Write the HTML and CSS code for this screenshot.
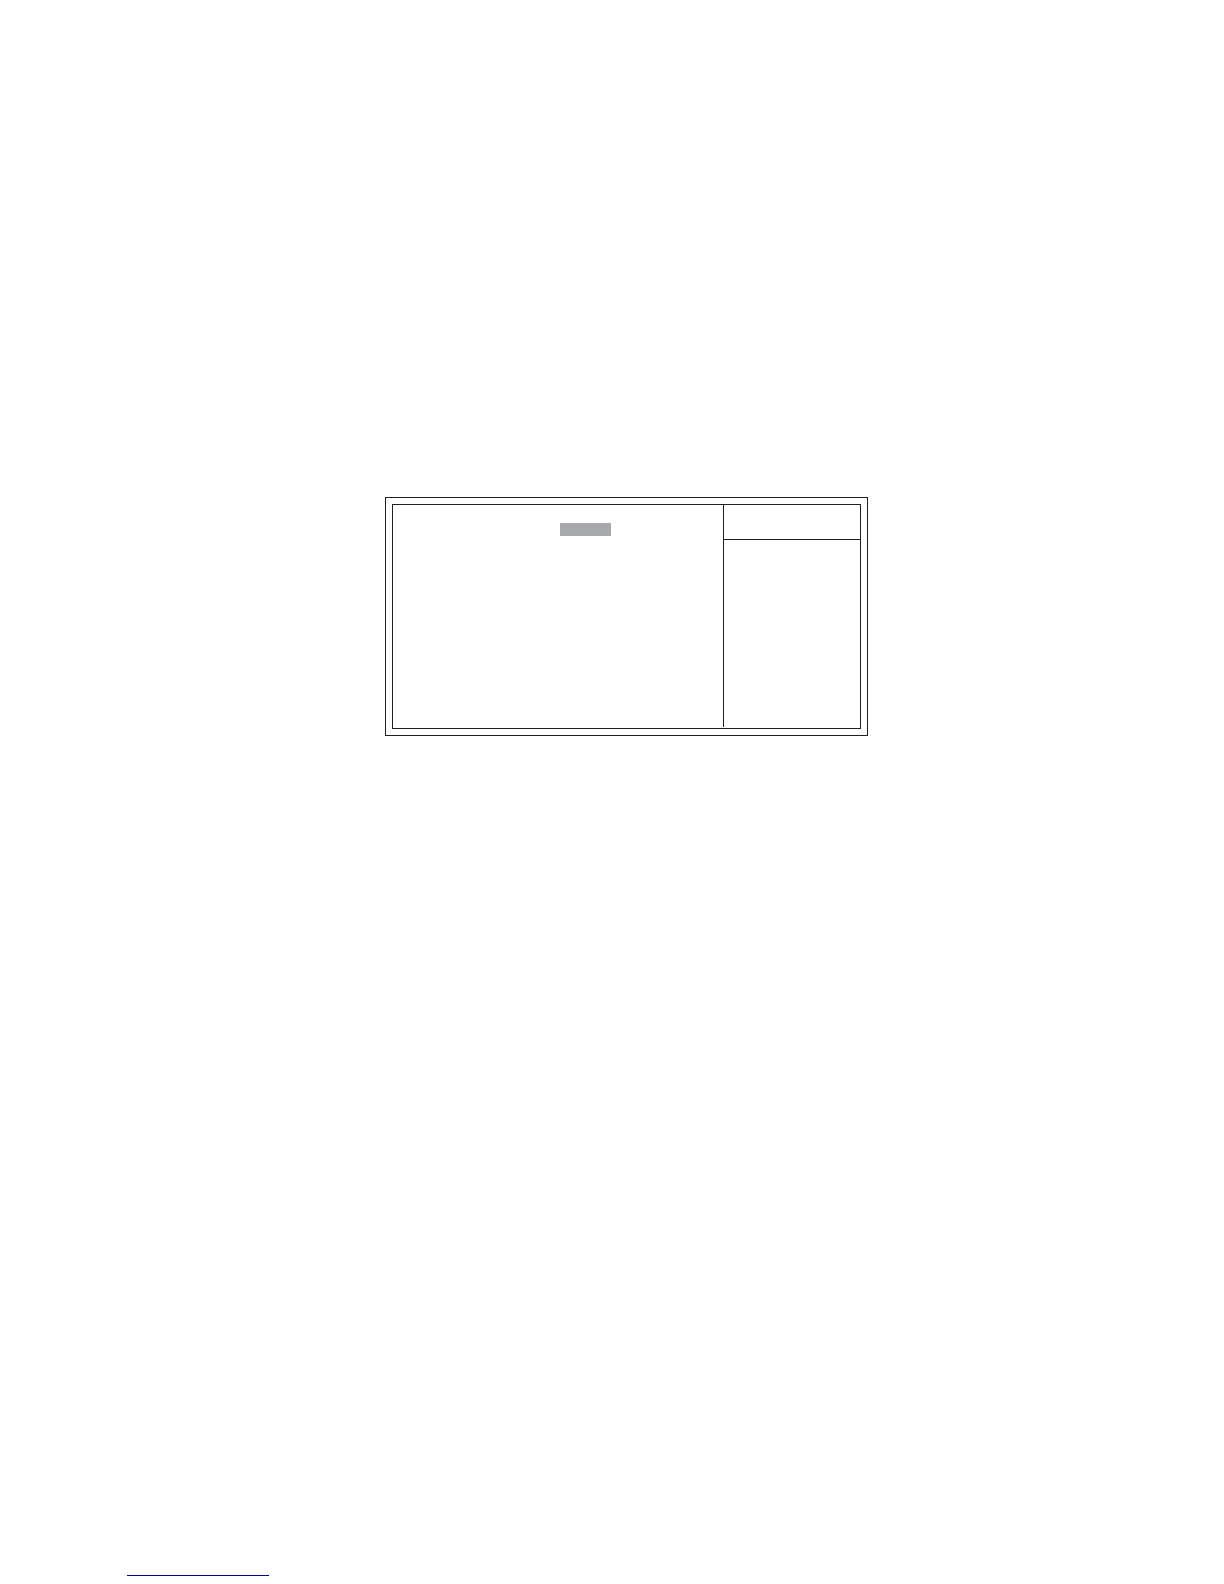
FILE: index.html
```
<!DOCTYPE html>
<html lang="en">
<head>
  <meta charset="utf-8">
  <link rel="stylesheet" href="styles.css">
</head>
<body>
  <main class="content">
    <div class="setup-screen">
      <div class="setup-inner">
        <div class="settings">
          <div class="selected"></div>
        </div>
        <div class="help">
          <div class="help-title"></div>
        </div>
      </div>
    </div>
  </main>
  <footer class="footer">
    <a class="footer-link" href="#"></a>
  </footer>
</body>
</html>
```

FILE: styles.css
```
* {
  box-sizing: border-box;
}
body {
  display: flex;
  flex-direction: column;
  justify-content: space-between;
  min-height: 100vh;
  margin: 0;
  background: #fff;
  font-family: "Liberation Sans", Arial, sans-serif;
}
.content {
  padding: 497px 356px 0 385px;
}
/* double frame around the setup screen */
.setup-screen {
  padding: 6px;
  border: 1px solid #231f20;
}
.setup-inner {
  display: flex;
  min-height: 225px;
  padding-bottom: 1px;
  border: 1px solid #231f20;
}
.settings {
  flex: 1;
  padding: 18px 112px 0 167px;
}
.selected {
  height: 13px;
  background: #a7a8ab;
}
.help {
  width: 137px;
  border-left: 1px solid #231f20;
}
.help-title {
  height: 35px;
  border-bottom: 1px solid #231f20;
}
.footer {
  padding: 0 127px 8px;
}
.footer-link {
  display: block;
  width: 142px;
  border-bottom: 1px solid #000096;
}
```
